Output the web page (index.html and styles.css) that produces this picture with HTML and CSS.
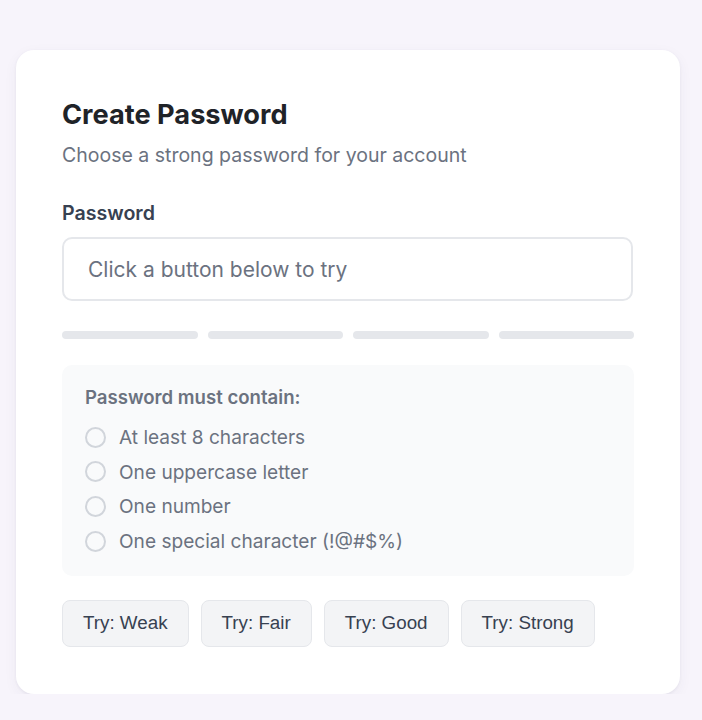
FILE: index.html
```html
<!DOCTYPE html>
<html lang="en">
<head>
<meta charset="utf-8">
<title>Create Password</title>
<link rel="stylesheet" href="styles.css">
</head>
<body>
<main class="card">
  <h1 class="title">Create Password</h1>
  <p class="subtitle">Choose a strong password for your account</p>
  <label class="label" for="pw">Password</label>
  <input class="input" id="pw" type="text" placeholder="Click a button below to try">
  <div class="bars">
    <span class="bar"></span>
    <span class="bar"></span>
    <span class="bar"></span>
    <span class="bar"></span>
  </div>
  <section class="reqs">
    <h2 class="reqs-title">Password must contain:</h2>
    <ul class="req-list">
      <li class="req"><span class="dot"></span>At least 8 characters</li>
      <li class="req"><span class="dot"></span>One uppercase letter</li>
      <li class="req"><span class="dot"></span>One number</li>
      <li class="req"><span class="dot"></span>One special character (!@#$%)</li>
    </ul>
  </section>
  <div class="actions">
    <button class="btn" type="button">Try: Weak</button>
    <button class="btn" type="button">Try: Fair</button>
    <button class="btn" type="button">Try: Good</button>
    <button class="btn" type="button">Try: Strong</button>
  </div>
</main>
</body>
</html>
```
FILE: styles.css
```css
* { box-sizing: border-box; }

html, body {
  margin: 0;
  background: #f7f4fb;
}

body {
  padding: 50px 0 0 16px;
  font-family: Inter, "Noto Sans", sans-serif;
}

.card {
  width: 664px;
  background: #ffffff;
  border-radius: 18px;
  padding: 46px 46px 47px 46px;
  box-shadow: 0 1px 3px rgba(60, 50, 90, 0.07), 0 4px 14px rgba(60, 50, 90, 0.05);
  display: flex;
  flex-direction: column;
}

.title {
  margin: 0;
  font-size: 27.2px;
  line-height: 38px;
  font-weight: 650;
  color: #1f2328;
}

.subtitle {
  margin: 8px 0 0;
  font-size: 19.5px;
  line-height: 26px;
  color: #6b7280;
}

.label {
  margin-top: 33px;
  font-size: 19.6px;
  line-height: 24px;
  font-weight: 600;
  color: #374151;
}

.input {
  margin-top: 12px;
  width: 571px;
  height: 64px;
  border: 2px solid #e5e7eb;
  border-radius: 10px;
  padding: 0 24px;
  font-family: Inter, "Noto Sans", sans-serif;
  font-size: 21px;
  color: #374151;
  background: #fff;
  outline: none;
}

.input::placeholder {
  color: #6b7280;
}

.bars {
  margin-top: 30px;
  display: flex;
  gap: 10px;
}

.bar {
  flex: 1;
  height: 8px;
  border-radius: 4px;
  background: #e5e7eb;
}

.reqs {
  margin-top: 26px;
  background: #f9fafb;
  border-radius: 10px;
  padding: 20px 22px 22px 23px;
}

.reqs-title {
  margin: 0;
  font-size: 18.6px;
  line-height: 24px;
  font-weight: 600;
  color: #6b7280;
}

.req-list {
  list-style: none;
  margin: 16px 0 0;
  padding: 0;
  display: flex;
  flex-direction: column;
  gap: 10.2px;
}

.req {
  display: flex;
  align-items: center;
  gap: 13px;
  font-size: 19.1px;
  line-height: 24.5px;
  color: #6b7280;
}

.dot {
  width: 21px;
  height: 21px;
  border: 2px solid #d1d5db;
  border-radius: 50%;
  flex: none;
}

.actions {
  margin-top: 24px;
  display: flex;
  gap: 12px;
}

.btn {
  height: 47px;
  padding: 0 20px;
  border: 1px solid #e5e7eb;
  border-radius: 8px;
  background: #f3f4f6;
  font-family: "Liberation Sans", Arial, sans-serif;
  font-size: 18.8px;
  color: #374151;
}
```
